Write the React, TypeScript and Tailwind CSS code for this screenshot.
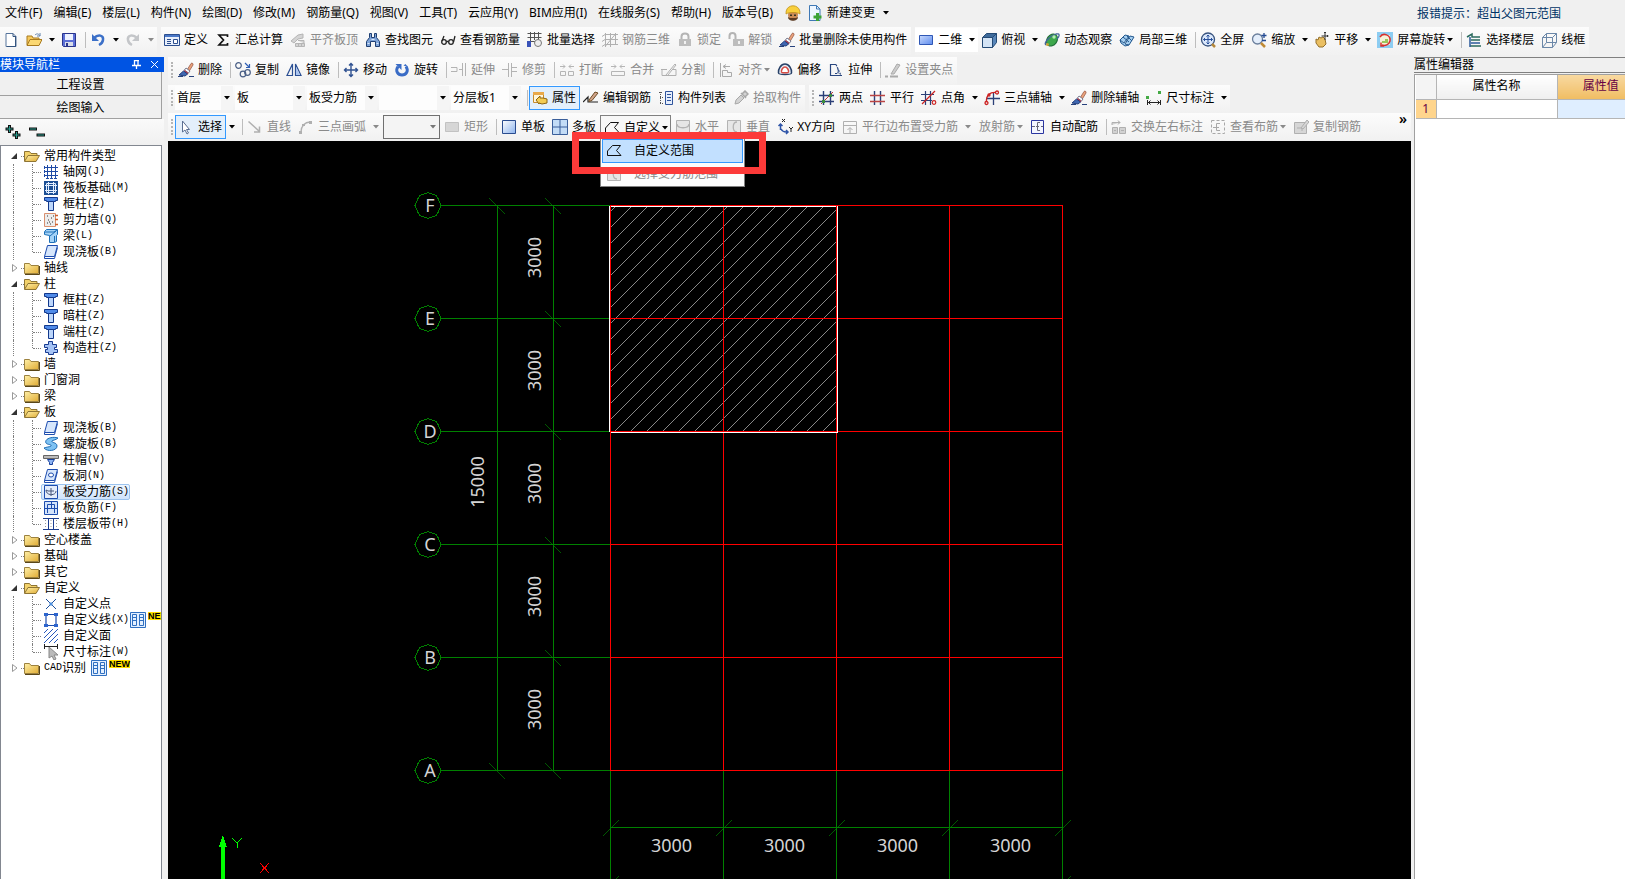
import type { ReactNode } from 'react';
import clsx from 'clsx';

const icons: Record<string, ReactNode> = {
  new: (
    <g>
      <path d="M3 1.5h7l3 3v10H3z" fill="#fff" stroke="#56749c" />
      <path d="M10 1.5v3h3M12.5 5v9.5H4" fill="none" stroke="#35557f" />
    </g>
  ),
  open: (
    <g>
      <path d="M1 13V4h5l1 2h6v3" fill="#f6c95c" stroke="#a87a1e" />
      <path d="M1 13.5l3-6h12l-3 6z" fill="#fbd873" stroke="#a87a1e" />
      <path d="M9 3c2-2 4-1 5 1m0-3v3h-3" fill="none" stroke="#6585ad" />
    </g>
  ),
  save: (
    <g>
      <path d="M1.5 1.5h13v13h-12l-1-1z" fill="#5c6fd6" stroke="#29348c" />
      <path d="M4 2h8v6H4z" fill="#eef2ff" />
      <path d="M4 10h8v4H4z" fill="#d9dde8" />
      <path d="M5 11h2v3H5z" fill="#29348c" />
    </g>
  ),
  undo: (
    <g>
      <path d="M4 6c4-4 10-3 9 2-.4 3-2 4-4 5" fill="none" stroke="#3c70c8" strokeWidth="2.5" />
      <path d="M2 2v7h7z" fill="#3c70c8" />
    </g>
  ),
  redo: (
    <g>
      <path d="M12 6C8 2 2 3 3 8c.4 3 2 4 4 5" fill="none" stroke="#c4c6c9" strokeWidth="2.5" />
      <path d="M14 2v7H7z" fill="#c4c6c9" />
    </g>
  ),
  define: (
    <g>
      <path d="M.5 2.5h15v11H.5z" fill="#e9f0fc" stroke="#2c4f8f" />
      <path d="M1 3h14v2H1z" fill="#4a78c8" />
      <path d="M3 7.5h4M3 9.5h4M3 11.5h4" stroke="#2c4f8f" />
      <path d="M9.5 7.5h4v4h-4z" fill="#fff" stroke="#2c4f8f" />
    </g>
  ),
  sum: <path d="M12.5 5V3H4l4.500 5L4 13h8.500v-2" fill="none" stroke="#111" strokeWidth="1.700" />,
  alignTop: (
    <g stroke="#b5b5b5" fill="#d4d4d4">
      <path d="M1 9l7-6 5-1v4l-5 1-4 4z" />
      <path d="M5.5 11.5h9v3h-9zM8.5 11.5v3M11.5 11.5v3M8 8.5h6v3" />
    </g>
  ),
  find: (
    <g fill="#7ea3d8" stroke="#1e3f73">
      <path d="M4.5 1.5h2v4h3v-4h2v4l3 4v5h-4v-5h-5v5h-4v-5l3-4z" />
      <path d="M2.5 11.5h2M11.5 11.5h2M6.5 7.5h3" stroke="#dbe8fa" />
    </g>
  ),
  glasses: (
    <g fill="none" stroke="#222" strokeWidth="1.300">
      <circle cx="4" cy="10" r="2.300" />
      <circle cx="11" cy="10" r="2.300" />
      <path d="M6.500 9.500h2M2 9l2-5M13.500 10L15 4" />
    </g>
  ),
  batch: (
    <g fill="none" stroke="#555">
      <path d="M.5 1.5h14M.5 5.5h14M3.5 0v12M7.5 0v8M11.5 0v8M.5 9.5h8" />
      <path d="M0 9h4v6H0z" fill="#3852b8" stroke="none" />
      <circle cx="11" cy="11" r="3.500" stroke="#777" fill="#eee" />
    </g>
  ),
  rebar3d: (
    <g fill="none" stroke="#b0b0b0">
      <path d="M3.5 1v14M8.5 1v14M13.5 1v11M0 4.5l3-2h13M0 9.5l3-2h13M0 14.5l3-2h13M3.5 14l10-12" />
    </g>
  ),
  lock: (
    <g>
      <path d="M4.500 7V4.500c0-4 7-4 7 0V7" fill="none" stroke="#b4b4b4" strokeWidth="2" />
      <path d="M2 7h12v7H2z" fill="#bdbdbd" />
      <path d="M7 9h2v3H7z" fill="#f1f1f1" />
    </g>
  ),
  unlock: (
    <g>
      <path d="M1.500 7V4c0-4 6-4 6 0v3" fill="none" stroke="#b4b4b4" strokeWidth="2" />
      <path d="M5 7h11v7H5z" fill="#bdbdbd" />
      <path d="M10 9h2v3h-2z" fill="#f1f1f1" />
    </g>
  ),
  brush: (
    <g>
      <path d="M9 8l4-6.500c1-1 2.500 0 2 1.500L11 9.500z" fill="#e9a27c" stroke="#8f5140" strokeWidth=".7" />
      <path d="M8 6l4 3-1.500 2-4-3z" fill="#fff" stroke="#59617a" strokeWidth=".8" />
      <path d="M6.500 8l4 3-1 1.500-4-3z" fill="#b83a4a" />
      <path d="M1 13l4.500-4 4 3-2.500 2z" fill="#3f67b2" stroke="#223f7c" />
      <path d="M0 14.500h5m6 0h5" stroke="#27427d" />
    </g>
  ),
  copy: (
    <g fill="none" stroke="#4a5f86" strokeWidth="1.200">
      <circle cx="3.500" cy="3.500" r="2.800" />
      <circle cx="8" cy="12" r="2.800" />
      <circle cx="12.500" cy="10.500" r="2.800" />
      <path d="M10 1l4 4m.5-3v3.500H11" stroke="#2f5fb5" />
    </g>
  ),
  mirror: (
    <g fill="none" stroke="#2b4f93" strokeWidth="1.200">
      <path d="M6.500 2v11.500H1zM9.500 2v11.500H15z" />
      <path d="M10 5v8h4z" fill="#a9c3ef" stroke="none" />
    </g>
  ),
  move: (
    <g fill="none" stroke="#2f5191" strokeWidth="1.400">
      <path d="M8 1.500v13M1.500 8h13M6 3.500l2-2 2 2M6 12.500l2 2 2-2M3.500 6l-2 2 2 2M12.500 6l2 2-2 2" />
    </g>
  ),
  rotate: (
    <g>
      <path d="M4 4.500c-3 4.500 0 8.500 4 8.500s7-4 4-8.500" fill="none" stroke="#3a6cc6" strokeWidth="3" />
      <path d="M1.500 2h6v6zM9.500 3.500l2-1.500 2.500 3z" fill="#3a6cc6" />
    </g>
  ),
  extend: <path d="M0 5.500h6v4H0M8 7.500h3M11.500 1v13M14.500 1v13" fill="none" stroke="#b3b3b3" />,
  trim: <path d="M0 7.500h6M6.500 1v14M9.500 1v14M10 5.500h5M10 9.500h5" fill="none" stroke="#b3b3b3" />,
  breakUp: <path d="M1 4.500h5m-2-2l2 2-2 2M15 4.500h-5m2-2l-2 2 2 2M1.500 9.500h5v4h-5zM9.500 9.500h5v4h-5z" fill="none" stroke="#b5b5b5" />,
  merge: <path d="M1 4.500h5m-2-2l2 2-2 2M15 4.500h-5m2-2l-2 2 2 2M1.500 9.500h13v4h-13zM4 9.500h2M10 9.500h2" fill="none" stroke="#b5b5b5" />,
  split: (
    <g fill="none" stroke="#b0b0b0">
      <path d="M0 7.500h6m5 0h4v6H1v-6M5 13l9-11 1 1-8 10" />
    </g>
  ),
  align: <path d="M2.500 1v14M5 4.500h7M5 4.500l3-2m-3 2l3 2M4.500 8.500h5v2h4v4h-9z" fill="none" stroke="#aaa" />,
  offset: (
    <g>
      <path d="M8 2c4 0 7 5 6.500 9-.3 2-12.700 2-13 0C1 7 4 2 8 2z" fill="#e9eef7" stroke="#274067" strokeWidth="1.500" />
      <path d="M8 5c2 0 4 3 3.500 5-.3 1-6.700 1-7 0C4 8 6 5 8 5z" fill="#fff" stroke="#d54b43" strokeWidth="1.500" />
    </g>
  ),
  stretch: (
    <g fill="none" stroke="#29467f" strokeWidth="1.200">
      <path d="M8 2.500H2.500v11H14M2.500 2.500v11" />
      <path d="M8 2.500l5 11M10 6.500v5h-4" strokeDasharray="2 1" />
    </g>
  ),
  pen: (
    <g>
      <path d="M6 12l6-10 3 1-6 9z" fill="#cdcdcd" stroke="#aaa" />
      <path d="M0 14.500h3m2 0h8" stroke="#aaa" strokeWidth="2" />
    </g>
  ),
  props: (
    <g>
      <path d="M1.500 2.500h10v10h-10z" fill="#fff6dc" stroke="#c68a2a" />
      <path d="M1 2h11v3H1z" fill="#e9a94b" />
      <path d="M4 10l4-4v2h3l4 1v4l-5 1-3-1v1z" fill="#f4cc53" stroke="#8d6412" />
    </g>
  ),
  editRebar: (
    <g>
      <path d="M0 12l5-5v5h10" stroke="#222" strokeWidth="1.200" fill="none" />
      <path d="M6 10l6-8 3 1-6 7.500-3 1z" fill="#d2a48a" stroke="#6d4c24" />
    </g>
  ),
  list: (
    <g>
      <path d="M1 2.500h4M2.500 2v12M2 7.500h3M2 13.500h3" stroke="#555" strokeDasharray="1 1" fill="none" />
      <path d="M7.500 1.500h7v13h-7z" fill="#e6eefc" stroke="#2f549c" />
      <path d="M9 4.500h4M9 7.500h4M9 10.500h4" stroke="#2f549c" />
    </g>
  ),
  picker: (
    <g stroke="#a8a8a8" fill="#d3d3d3">
      <path d="M2 14l1-4 5-5 3 3-5 5z" />
      <path d="M8 3l5 5M9 4l3-3 3 3-3 3z" strokeWidth="1.500" />
    </g>
  ),
  twoPoint: (
    <g fill="none">
      <path d="M4.500 1v14M11.500 1v14M0 5.500h15M0 11.500h15" stroke="#2b3f77" strokeWidth="1.400" />
      <path d="M2 14L14 2" stroke="#b33" />
      <path d="M3 10h3v3H3zM10 4h3v3h-3z" fill="#3c8c3c" />
    </g>
  ),
  parallel: (
    <g fill="none" strokeWidth="1.400">
      <path d="M4.500 1v14M10.500 1v14" stroke="#2b3f77" />
      <path d="M0 5.500h15M0 11.500h15" stroke="#b44" />
    </g>
  ),
  pointAngle: (
    <g fill="none" strokeWidth="1.200">
      <path d="M4.500 1v14M9.500 1v14M0 4.500h13M0 10.500h11" stroke="#2b3f77" />
      <path d="M1 14L14 1" stroke="#c22" />
      <circle cx="13" cy="12.500" r="1.800" stroke="#c22" />
    </g>
  ),
  threePoint: (
    <g fill="none" strokeWidth="1.300">
      <path d="M2 8.500h14M9.500 3v12" stroke="#2b3f77" />
      <path d="M2.500 12C2 5 6 2 12 2.500" stroke="#c22" />
      <circle cx="13" cy="2.500" r="1.500" stroke="#c22" />
      <circle cx="2.500" cy="13" r="1.500" stroke="#c22" />
      <circle cx="5" cy="5" r="1" stroke="#c22" />
    </g>
  ),
  dimension: (
    <g>
      <path d="M1.500 10v5M14.500 10v5M2 12.500h12M4.500 10.500l-2 2 2 2M11.500 10.500l2 2-2 2" fill="none" stroke="#222" />
      <path d="M0 6h3v3H0zM12 1h3v3h-3z" fill="#4a4" />
    </g>
  ),
  cursor: <path d="M4.500 2v11l2.500-2 2 4 1.500-1-2-3.500h3z" fill="#fff" stroke="#5b6f92" />,
  line: <path d="M1.500 2.500l11 10m0-5v5.500H7" fill="none" stroke="#b0b0b0" strokeWidth="1.500" />,
  arc: (
    <g fill="none" stroke="#b0b0b0" strokeWidth="1.300">
      <path d="M3 13C3 7 7 3 12 3" />
      <path d="M1 12h3v3H1zM11 2h3v3h-3zM4 5h3v2H4z" fill="#b0b0b0" stroke="none" />
    </g>
  ),
  rect: <path d="M1.500 3.500h13v9h-13z" fill="#d6d6d6" stroke="#c2c2c2" />,
  slab: <path d="M1.500 1.500h13v13h-13z" fill="url(#slabFill)" stroke="#2a4c8f" />,
  slabs: (
    <g>
      <path d="M.5 .5h15v15H.5z" fill="#c3dcf6" stroke="#3a5f9a" />
      <path d="M8 0v16M0 8h16" stroke="#3a5f9a" />
    </g>
  ),
  polygon: <path d="M6.500 2.500h8l-4 5 4.500 5H1.500V8z" fill="none" stroke="#111" />,
  horizontal: (
    <g fill="none" stroke="#b3b3b3">
      <path d="M1.500 1.500h13v12h-13z" fill="#e6e6e6" />
      <path d="M2 5c0 5 12 5 12 0" strokeWidth="1.300" />
    </g>
  ),
  vertical: (
    <g fill="none" stroke="#b3b3b3">
      <path d="M1.500 1.500h13v13h-13z" fill="#e6e6e6" />
      <path d="M11 3c-5 0-5 10 0 10" strokeWidth="1.300" />
    </g>
  ),
  xy: (
    <g fill="none" stroke="#2f55a8" strokeWidth="1.500">
      <path d="M3.500 11V5M1.500 7l2-2 2 2M4 10c2 4 5 3 7 3M9 11l2 2-2 2" />
      <path d="M5 0l3 3M8 0L5 3M12 8l2 2 2-2M14 10v3" stroke="#222" strokeWidth="1" />
    </g>
  ),
  edges: (
    <g fill="none" stroke="#b0b0b0">
      <path d="M1.500 2.500h13v12h-13zM1 6.500h14" />
      <path d="M8 14V9M5.500 11L8 8.500l2.500 2.500" />
    </g>
  ),
  auto: (
    <g fill="none" stroke="#2a35a0">
      <path d="M1.500 1.500h12v13h-12z" fill="#f3f5ff" />
      <path d="M10 3.500H7.500v8H10M2 7.500h3M6 7.500h3M11 7.500h2" stroke="#667" />
    </g>
  ),
  swap: (
    <g fill="#d2d2d2" stroke="#b0b0b0">
      <path d="M1.500 8.500h5v6h-5zM8.500 8.500h6v6h-6zM1 6V3.500h8M7 1.500l2 2-2 2M3 11.500h2M10 11.500h3" />
    </g>
  ),
  viewRebar: (
    <g fill="none" stroke="#a8a8a8">
      <path d="M1.500 1.500h13v13h-13z" strokeDasharray="3 2" />
      <path d="M10 4.500H6.500v7H10M3 8.500h6" />
    </g>
  ),
  copyRebar: (
    <g fill="#d6d6d6" stroke="#b0b0b0">
      <path d="M1.500 3.500h12v11h-12z" />
      <path d="M4 9h5v3M8 9l6-8 2 2-6 7z" />
    </g>
  ),
  plane: <path d="M1.500 3.500h13v9h-13z" fill="url(#planeFill)" stroke="#2f57b5" />,
  cube: (
    <g stroke="#244a75">
      <path d="M1.500 5.500l4-4h10l-4 4z" fill="#3f6b9b" />
      <path d="M1.500 5.500h10v10h-10z" fill="#d4e4f5" />
      <path d="M11.500 5.500l4-4v9l-4 5z" fill="#5886b9" />
    </g>
  ),
  orbit: (
    <g>
      <ellipse cx="8" cy="8" rx="5" ry="6.500" transform="rotate(35 8 8)" fill="#3da84c" stroke="#1d6a35" />
      <path d="M2 13c-3-2 4-9 10-11 4-1 4 2 1 5" fill="none" stroke="#44659b" strokeWidth="1.300" />
      <circle cx="10" cy="5" r="1.700" fill="#b3edb0" />
      <circle cx="3.500" cy="12.500" r="1.500" fill="#c8a436" />
    </g>
  ),
  local3d: (
    <g stroke="#24598f" fill="#a6cff0">
      <path d="M1 8l5-5 4 1-5 7zM6 12l5-8 4 1-5 8zM1 8l1 3 4 3 4-1" />
      <path d="M4 5l6 5M8 4l5 5" fill="none" />
    </g>
  ),
  fit: (
    <g>
      <circle cx="8" cy="7.500" r="6.500" fill="#dbe8fb" stroke="#38537f" strokeWidth="1.300" />
      <path d="M8 3v9M3.500 7.500h9M6.500 4.500L8 3l1.500 1.500M6.500 10.500L8 12l1.500-1.500M5 6L3.500 7.500 5 9M11 6l1.500 1.500L11 9" fill="none" stroke="#274f9b" />
      <path d="M12 12l3 3" stroke="#b6883b" strokeWidth="2.500" />
    </g>
  ),
  zoom: (
    <g>
      <circle cx="6.500" cy="7" r="5" fill="#e4eefb" stroke="#6b7f9c" strokeWidth="1.300" />
      <path d="M10 11l4 4" stroke="#c08b35" strokeWidth="2.500" />
      <path d="M13 1v5M10.500 3.500h5M11 8.500h4" stroke="#234a93" strokeWidth="1.300" />
    </g>
  ),
  pan: (
    <g>
      <path d="M2 7l2 1 1-3 2 1 2-1 2 2 1 5-3 3H5l-3-4z" fill="#eabf62" stroke="#94702b" />
      <path d="M11 0v8M7.500 4h7M10 1l1-1 1 1M13 3l1 1-1 1" stroke="#333" fill="none" />
    </g>
  ),
  screenRotate: (
    <g>
      <path d="M0 0h16v16H0z" fill="#8dcdf2" />
      <path d="M3 3h10v10H3z" fill="#f5f2d8" />
      <path d="M5 9h3v-2h3v4H5z" fill="#9cc75e" />
      <path d="M3 5c3-5 11-2 10 4-1 4-5 5-8 4m-1-2.500v3.500h3" fill="none" stroke="#d6302d" strokeWidth="1.500" />
    </g>
  ),
  floors: (
    <g fill="none" strokeWidth="1.500">
      <path d="M1 5l5-3v3h8M5 8h9M4 14h11" stroke="#2a6a5d" />
      <path d="M4 5v10M5 11h9" stroke="#2b5a9b" />
    </g>
  ),
  wire: (
    <path d="M1.500 5.500l4-4h10v9l-4 5h-10zM1.500 5.500h10v10M11.500 5.500l4-4M5.500 1.500v9h10M1.500 15.500l4-5" fill="none" stroke="#6b87a8" />
  ),
  helmet: (
    <g>
      <circle cx="8" cy="10" r="5" fill="#c98a54" />
      <path d="M1 9c-1-11 15-11 14 0-3-2-11-2-14 0z" fill="#f8cf3c" stroke="#b98a16" strokeWidth=".7" />
      <path d="M3 12c0 5 10 5 10 0l-2 1H5z" fill="#5b3a22" />
      <path d="M5 9.500h2v1.500H5zM9 9.500h2v1.500H9z" fill="#332" />
    </g>
  ),
  addDoc: (
    <g>
      <path d="M2.500 .5h7l3.500 3.500v11.500H2.500z" fill="#eef6ff" stroke="#3f78b5" />
      <path d="M9.500 .5V4H13" fill="none" stroke="#3f78b5" />
      <path d="M9 8h3v2.500h2.500v3H12V16H9v-2.500H6.500v-3H9z" fill="#3da336" />
    </g>
  ),
  folder: (
    <g>
      <path d="M.5 13.500V3.500h5l1.500 2h7.500v8z" fill="url(#folderFill)" stroke="#9c8240" />
      <path d="M15.500 6v8.500H1" fill="none" stroke="#594619" />
    </g>
  ),
  folderOpen: (
    <g>
      <path d="M.5 13V3.500h5l1.500 2h6V8" fill="#f3d26b" stroke="#8f7534" />
      <path d="M.5 13.500l3.500-6h11.500l-3.500 6z" fill="url(#folderFill)" stroke="#8f7534" />
    </g>
  ),
  axisNet: <path d="M4.500 1v13M8.500 1v13M12.500 1v13M1 3.500h14M1 7.500h14M1 11.500h14M3 14.500h3M7 14.500h3M11 14.500h3M1.500 2v3M1.500 6v3M1.500 10v3" fill="none" stroke="#1e4aa5" />,
  raft: (
    <g>
      <path d="M1 1h14v14H1z" fill="#1c4f95" />
      <path d="M3.500 3.500h9v9h-9zM5.500 2v12M10.500 2v12M2 5.500h12M2 10.500h12" fill="none" stroke="#e3efff" />
    </g>
  ),
  column: (
    <g>
      <path d="M1.500 1.500h13v3h-2v1h-9v-1h-2z" fill="#4f8ae8" stroke="#12388c" />
      <path d="M5.500 5.500h5v9h-5z" fill="#bcd6fb" stroke="#12388c" />
    </g>
  ),
  wall: (
    <g>
      <path d="M1.500 1.500h11v13h-11z" fill="#ececec" stroke="#d8906f" />
      <path d="M4 4h1M8 6h1M5 8h1M9 10h1M4 11h1M7 12h1M10 4h1M6 10h1" stroke="#333" />
      <path d="M12 3.500h3M12 7.500h3M12 12.500h3" stroke="#d0622f" strokeWidth="1.500" />
    </g>
  ),
  beam: (
    <g fill="#a4d3f7" stroke="#1e70b8">
      <path d="M1.500 3.500l2-2h11v5l-1 1v6l-2 1h-5v-7l-5-1z" />
      <path d="M7 8l6-5M2 4h9l3-2M11.500 8v6" fill="none" />
    </g>
  ),
  plate: (
    <g>
      <path d="M4.500 1.500h10l-3 11h-10z" fill="#d6e6fc" stroke="#1d4cae" />
      <path d="M1.500 12.500v2h10l3-11" fill="none" stroke="#1d4cae" />
    </g>
  ),
  structCol: (
    <path d="M5.500 1.500h4v3h4v3h-2v2h3v3h-4v2h-5v-2h-3v-3h2v-2h-3v-3h4z" fill="#a5c3f5" stroke="#173a90" />
  ),
  spiral: (
    <path d="M15 2C9 0 1 3 3 7c1 2 6 1 5 3-1 1-5 1-7 2 3 4 13 3 13-2 0-4-6-3-5-5 1-1 4-1 6-3z" fill="#7ec2f3" stroke="#1f6db5" />
  ),
  cap: (
    <g>
      <path d="M.5 3.500h15v3H.5z" fill="#bbb" stroke="#666" />
      <path d="M4.500 7.500h7l-2 3v2h-3v-2z" fill="#8eb5f3" stroke="#173f9c" />
    </g>
  ),
  hole: (
    <g>
      <path d="M4.500 1.500h10l-3 11h-10z" fill="#d6e6fc" stroke="#1d4cae" />
      <path d="M1.500 12.500v2h10l3-11" fill="none" stroke="#1d4cae" />
      <ellipse cx="8" cy="7" rx="2.500" ry="2" fill="#fff" stroke="#1d4cae" />
    </g>
  ),
  mainBar: (
    <g>
      <path d="M1.500 1.500h13v13h-13z" fill="#e4edfb" stroke="#1d4cae" />
      <path d="M3 6c0 6 10 6 10 1M8 4v8M5 7h6M3 6l2 1" fill="none" stroke="#45557a" />
    </g>
  ),
  negBar: (
    <g>
      <path d="M1.500 1.500h13v13h-13z" fill="#d3e3fb" stroke="#1d4cae" />
      <path d="M4.500 13V4.500h7V13M2 8.500h12M8.500 2v6" fill="none" stroke="#1d4cae" />
    </g>
  ),
  strip: (
    <g>
      <path d="M0 2.500h16M0 13.500h16M5.500 3v10M10.500 3v10" stroke="#1c3d8f" />
      <path d="M2.500 4v8M8 4v8M13.500 4v8" stroke="#999" strokeDasharray="1 2" />
    </g>
  ),
  point: (
    <g>
      <path d="M3 3l10 10M13 3L3 13" stroke="#1c4f9c" />
      <path d="M6.500 6.500h3v3h-3z" fill="#4b8fdf" />
    </g>
  ),
  polyline: (
    <g>
      <path d="M3 2.500h10v11H3z" fill="none" stroke="#1d4cae" strokeWidth="1.200" />
      <path d="M1 1h4v3H1zM11 1h4v3h-4zM1 12h4v3H1zM11 12h4v3h-4z" fill="#2c64cd" />
    </g>
  ),
  hatch: <path d="M1 5l4-4M1 10l9-9M1 15L15 1M6 15l9-9M11 15l4-4" stroke="#2758bd" />,
  dimCursor: (
    <g>
      <path d="M1.500 0v5M14.500 0v5M2 2.500h12" stroke="#222" />
      <path d="M6 3v11l3-2 2 4 2-1-2-4h4z" fill="#bbb" stroke="#888" />
    </g>
  ),
  film: (
    <g>
      <path d="M.5 .5h15v15H.5z" fill="#e4f0ff" stroke="#2f6fc0" />
      <path d="M2.500 2.500h4v11h-4zM9.500 2.500h4v11h-4zM3 5.500h3M3 8.500h3M10 5.500h3M10 8.500h3" fill="none" stroke="#2f6fc0" />
    </g>
  ),
};

function Icon({ name }: { name: string }) {
  return (
    <svg viewBox="0 0 16 16" className="size-4 shrink-0" aria-hidden="true">
      {icons[name]}
    </svg>
  );
}

function Caret() {
  return (
    <svg viewBox="0 0 8 4" className="h-1 w-2 shrink-0" aria-hidden="true">
      <path d="M1 0h6L4 3.500z" fill="currentColor" />
    </svg>
  );
}

type ToolProps = {
  icon?: string;
  label?: string;
  title?: string;
  off?: boolean;
  on?: boolean;
  // "split" has its own drop-down button, "tight" keeps the arrow beside the text
  arrow?: 'split' | 'tight';
};

function Tool({ icon, label, title, off, on, arrow }: ToolProps) {
  return (
    <div className={clsx('flex shrink-0 items-center', off ? 'text-[#8a8a8a]' : 'text-black')}>
      <button
        type="button"
        disabled={off}
        aria-label={label ?? title}
        className={clsx(
          'flex h-6 items-center gap-1 border',
          on ? 'border-[#3399ff] bg-[#e3effb]' : 'border-transparent',
          icon ? 'pl-[2px]' : 'pl-1',
          arrow === 'tight' ? 'pr-[2px]' : 'pr-[3px]',
        )}
      >
        {icon && <Icon name={icon} />}
        {label && <span>{label}</span>}
        {arrow === 'tight' && (
          <span className="-ml-[3px]">
            <Caret />
          </span>
        )}
      </button>
      {arrow === 'split' && (
        <button type="button" disabled={off} aria-label={`${label ?? title} 选项`} className="flex h-6 w-3 items-center justify-center">
          <Caret />
        </button>
      )}
    </div>
  );
}

function Sep() {
  return <div className="mr-px ml-1 h-4 w-px shrink-0 bg-[#bdbdbd]" />;
}

function Grip() {
  return <div className="mr-[2px] ml-[3px] h-4 shrink-0 border-l-2 border-dotted border-[#b5b5b5]" />;
}

function Bar({ children }: { children: ReactNode }) {
  return <div className="flex h-7 shrink-0 items-center bg-linear-to-b from-[#fcfcfc] to-[#f1f1f1] pb-[2px]">{children}</div>;
}

function Combo({ label, value, width }: { label: string; value: string; width: string }) {
  return (
    <div className={clsx('relative mr-[2px] h-6 shrink-0 bg-[#fdfdfd]', width)}>
      <select aria-label={label} className="h-full w-full appearance-none bg-transparent pl-[2px] outline-none">
        <option>{value}</option>
      </select>
      <span className="pointer-events-none absolute inset-y-0 right-0 flex w-3 items-center justify-center bg-[#f5f5f5]">
        <Caret />
      </span>
    </div>
  );
}

const menus = [
  '文件(F)', '编辑(E)', '楼层(L)', '构件(N)', '绘图(D)', '修改(M)', '钢筋量(Q)', '视图(V)', '工具(T)',
  '云应用(Y)', 'BIM应用(I)', '在线服务(S)', '帮助(H)', '版本号(B)',
];

function MenuBar() {
  return (
    <header className="flex h-[27px] shrink-0 items-center justify-between pb-[2px]">
      <nav className="flex items-center">
        {menus.map((m) => (
          <button key={m} type="button" className="shrink-0 pr-[6px] pl-[5px]">
            {m}
          </button>
        ))}
        <button type="button" aria-label="客服" className="ml-[6px] shrink-0">
          <Icon name="helmet" />
        </button>
        <button type="button" className="ml-[6px] flex shrink-0 items-center gap-1">
          <Icon name="addDoc" />
          新建变更
          <span className="ml-[3px]">
            <Caret />
          </span>
        </button>
      </nav>
      <p className="mt-[2px] mr-16 shrink-0 text-[#003366]">报错提示：超出父图元范围</p>
    </header>
  );
}

function MainToolbar() {
  return (
    <div className="flex h-[30px] shrink-0 items-start gap-1">
      <Bar>
        <Tool icon="new" title="新建" />
        <Tool icon="open" title="打开" arrow="split" />
        <Tool icon="save" title="保存" />
        <Sep />
        <Tool icon="undo" title="撤销" arrow="split" />
        <Tool icon="redo" title="恢复" arrow="split" off />
      </Bar>
      <Bar>
        <Tool icon="define" label="定义" />
        <Tool icon="sum" label="汇总计算" />
        <Tool icon="alignTop" label="平齐板顶" off />
        <Tool icon="find" label="查找图元" />
        <Tool icon="glasses" label="查看钢筋量" />
        <Tool icon="batch" label="批量选择" />
        <Tool icon="rebar3d" label="钢筋三维" off />
        <Tool icon="lock" label="锁定" off />
        <Tool icon="unlock" label="解锁" off />
        <Tool icon="brush" label="批量删除未使用构件" />
      </Bar>
      <Bar>
        <div className="bg-white">
          <Tool icon="plane" label="二维" arrow="split" />
        </div>
        <Tool icon="cube" label="俯视" arrow="split" />
        <Tool icon="orbit" label="动态观察" />
        <Tool icon="local3d" label="局部三维" />
        <Sep />
        <Tool icon="fit" label="全屏" />
        <Tool icon="zoom" label="缩放" arrow="split" />
        <Tool icon="pan" label="平移" arrow="split" />
        <Tool icon="screenRotate" label="屏幕旋转" arrow="tight" />
        <Sep />
        <Tool icon="floors" label="选择楼层" />
        <Tool icon="wire" label="线框" />
      </Bar>
    </div>
  );
}

function EditToolbar() {
  return (
    <div className="flex h-7 shrink-0 items-center">
      <Bar>
        <Grip />
        <Tool icon="brush" label="删除" />
        <Sep />
        <Tool icon="copy" label="复制" />
        <Tool icon="mirror" label="镜像" />
        <Sep />
        <Tool icon="move" label="移动" />
        <Tool icon="rotate" label="旋转" />
        <Sep />
        <Tool icon="extend" label="延伸" off />
        <Tool icon="trim" label="修剪" off />
        <Sep />
        <Tool icon="breakUp" label="打断" off />
        <Tool icon="merge" label="合并" off />
        <Tool icon="split" label="分割" off />
        <Sep />
        <Tool icon="align" label="对齐" arrow="tight" off />
        <Tool icon="offset" label="偏移" />
        <Tool icon="stretch" label="拉伸" />
        <Sep />
        <Tool icon="pen" label="设置夹点" off />
      </Bar>
    </div>
  );
}

function ComponentToolbar() {
  return (
    <div className="flex h-7 shrink-0 items-center gap-1">
      <Bar>
        <Grip />
        <Combo label="楼层" value="首层" width="w-[58px]" />
        <Combo label="构件大类" value="板" width="w-[70px]" />
        <Combo label="构件类型" value="板受力筋" width="w-[70px]" />
        <Combo label="构件" value="" width="w-[70px]" />
        <Combo label="分层" value="分层板1" width="w-[70px]" />
        <Sep />
        <Tool icon="props" label="属性" on />
        <Tool icon="editRebar" label="编辑钢筋" />
        <Tool icon="list" label="构件列表" />
        <Tool icon="picker" label="拾取构件" off />
      </Bar>
      <Bar>
        <Grip />
        <Tool icon="twoPoint" label="两点" />
        <Tool icon="parallel" label="平行" />
        <Tool icon="pointAngle" label="点角" arrow="split" />
        <Tool icon="threePoint" label="三点辅轴" arrow="split" />
        <Tool icon="brush" label="删除辅轴" />
        <Tool icon="dimension" label="尺寸标注" arrow="split" />
      </Bar>
    </div>
  );
}

function CustomMenu() {
  return (
    <div className="relative mr-px shrink-0">
      <button type="button" aria-expanded="true" className="flex h-6 w-[71px] items-center gap-1 border border-b-0 border-[#808080] bg-[#f7f7f7] pl-[3px]">
        <Icon name="polygon" />
        <span>自定义</span>
        <span className="-ml-[3px]">
          <Caret />
        </span>
      </button>
      <div className="absolute top-[22px] left-0 z-10 w-[145px] border border-[#808080] bg-[#fcfcfc] p-px" role="menu">
        <button type="button" role="menuitem" className="flex h-6 w-full items-center gap-3 border border-[#3399ff] bg-[#c2e0ff] pl-[3px]">
          <Icon name="polygon" />
          自定义范围
        </button>
        <button type="button" role="menuitem" disabled className="flex h-[22px] w-full items-center gap-3 pl-1 text-[#8a8a8a]">
          <Icon name="vertical" />
          选择受力筋范围
        </button>
      </div>
      <div className="pointer-events-none absolute top-[17px] -left-7 z-20 h-[42px] w-[194px] border-7 border-[#fc3a39]" />
    </div>
  );
}

function DrawToolbar() {
  return (
    <div className="flex h-7 shrink-0 items-center justify-between bg-linear-to-b from-[#fcfcfc] to-[#f1f1f1]">
      <div className="flex items-center">
        <Grip />
        <Tool icon="cursor" label="选择" on arrow="split" />
        <Sep />
        <Tool icon="line" label="直线" off />
        <Tool icon="arc" label="三点画弧" arrow="split" off />
        <div className="relative mx-px h-6 w-[57px] border border-[#707070] bg-[#f4f4f4]">
          <select aria-label="画弧方式" className="h-full w-full appearance-none bg-transparent">
            <option> </option>
          </select>
          <span className="pointer-events-none absolute inset-y-0 right-0 flex w-3 items-center justify-center text-[#777]">
            <Caret />
          </span>
        </div>
        <Tool icon="rect" label="矩形" off />
        <Sep />
        <Tool icon="slab" label="单板" />
        <Tool icon="slabs" label="多板" />
        <CustomMenu />
        <Tool icon="horizontal" label="水平" off />
        <Tool icon="vertical" label="垂直" off />
        <Tool icon="xy" label="XY方向" />
        <Tool icon="edges" label="平行边布置受力筋" arrow="split" off />
        <Tool label="放射筋" arrow="tight" off />
        <Tool icon="auto" label="自动配筋" />
        <Sep />
        <Tool icon="swap" label="交换左右标注" off />
        <Tool icon="viewRebar" label="查看布筋" arrow="tight" off />
        <Tool icon="copyRebar" label="复制钢筋" off />
      </div>
      <button type="button" aria-label="更多" className="mr-1 self-start text-sm leading-3 font-semibold">
        »
      </button>
    </div>
  );
}

type Leaf = { icon: string; label: string; hotkey?: string; selected?: boolean; badge?: string };
type Group = { label: string; prefix?: string; children?: Leaf[]; badge?: string };

const tree: Group[] = [
  {
    label: '常用构件类型',
    children: [
      { icon: 'axisNet', label: '轴网', hotkey: 'J' },
      { icon: 'raft', label: '筏板基础', hotkey: 'M' },
      { icon: 'column', label: '框柱', hotkey: 'Z' },
      { icon: 'wall', label: '剪力墙', hotkey: 'Q' },
      { icon: 'beam', label: '梁', hotkey: 'L' },
      { icon: 'plate', label: '现浇板', hotkey: 'B' },
    ],
  },
  { label: '轴线' },
  {
    label: '柱',
    children: [
      { icon: 'column', label: '框柱', hotkey: 'Z' },
      { icon: 'column', label: '暗柱', hotkey: 'Z' },
      { icon: 'column', label: '端柱', hotkey: 'Z' },
      { icon: 'structCol', label: '构造柱', hotkey: 'Z' },
    ],
  },
  { label: '墙' },
  { label: '门窗洞' },
  { label: '梁' },
  {
    label: '板',
    children: [
      { icon: 'plate', label: '现浇板', hotkey: 'B' },
      { icon: 'spiral', label: '螺旋板', hotkey: 'B' },
      { icon: 'cap', label: '柱帽', hotkey: 'V' },
      { icon: 'hole', label: '板洞', hotkey: 'N' },
      { icon: 'mainBar', label: '板受力筋', hotkey: 'S', selected: true },
      { icon: 'negBar', label: '板负筋', hotkey: 'F' },
      { icon: 'strip', label: '楼层板带', hotkey: 'H' },
    ],
  },
  { label: '空心楼盖' },
  { label: '基础' },
  { label: '其它' },
  {
    label: '自定义',
    children: [
      { icon: 'point', label: '自定义点' },
      { icon: 'polyline', label: '自定义线', hotkey: 'X', badge: 'NE' },
      { icon: 'hatch', label: '自定义面' },
      { icon: 'dimCursor', label: '尺寸标注', hotkey: 'W' },
    ],
  },
  { label: '识别', prefix: 'CAD', badge: 'NEW' },
];

function Badge({ text }: { text: string }) {
  return (
    <span className="flex shrink-0 items-start gap-[2px]">
      <Icon name="film" />
      <span className="h-2 bg-[#ffe000] font-['Liberation_Sans'] text-[9px] leading-2 font-bold">{text}</span>
    </span>
  );
}

function TreeLeaf({ leaf, last }: { leaf: Leaf; last: boolean }) {
  return (
    <li className="flex h-4 items-center">
      <span className="ml-3 h-4 w-[19px] shrink-0 border-l border-dotted border-[#808080]" />
      <span className={clsx('w-px shrink-0 self-start border-l border-dotted border-[#808080]', last ? 'h-2' : 'h-4')} />
      <span className="w-2 shrink-0 border-t border-dotted border-[#808080]" />
      <button
        type="button"
        className={clsx(
          'flex h-4 shrink-0 items-center gap-1 rounded-xs border pl-px whitespace-nowrap',
          leaf.selected ? 'border-[#9cc3ee] bg-linear-to-b from-[#eef6ff] to-[#cfe3fb]' : 'border-transparent',
        )}
      >
        <Icon name={leaf.icon} />
        <span className="flex items-center">
          {leaf.label}
          {leaf.hotkey && <span className="font-['Liberation_Mono'] text-[10px]">({leaf.hotkey})</span>}
        </span>
      </button>
      {leaf.badge && <Badge text={leaf.badge} />}
    </li>
  );
}

function TreeGroup({ group }: { group: Group }) {
  const open = Boolean(group.children);
  return (
    <li>
      <button type="button" aria-expanded={open} className="flex h-4 items-center whitespace-nowrap">
        <svg viewBox="0 0 8 8" className="ml-[9px] size-2 shrink-0" aria-hidden="true">
          {open ? <path d="M7 1v6H1z" fill="#333" /> : <path d="M2.500 .500v7L7 4z" fill="#fff" stroke="#999" />}
        </svg>
        <span className="ml-[3px] w-[3px] border-t border-dotted border-[#808080]" />
        <Icon name={open ? 'folderOpen' : 'folder'} />
        <span className="mr-[5px] ml-1 flex items-center">
          {group.prefix && <span className="font-['Liberation_Mono'] text-[10px]">{group.prefix}</span>}
          {group.label}
        </span>
        {group.badge && <Badge text={group.badge} />}
      </button>
      {group.children && (
        <ul>
          {group.children.map((leaf, i) => (
            <TreeLeaf key={leaf.label} leaf={leaf} last={i === group.children!.length - 1} />
          ))}
        </ul>
      )}
    </li>
  );
}

function NavPanel() {
  return (
    <aside className="mr-1 flex w-[164px] shrink-0 flex-col">
      <div className="flex h-[15px] items-center bg-[#0054e3] text-white">
        <h2 className="flex-1">模块导航栏</h2>
        <button type="button" aria-label="固定">
          <svg viewBox="0 0 9 9" className="mr-[9px] size-[9px]">
            <path d="M2.500 0v5M6 0v5M2 .500h5M0 5.500h9M4.500 6v3" fill="none" stroke="#fff" strokeWidth="1.300" />
          </svg>
        </button>
        <button type="button" aria-label="关闭">
          <svg viewBox="0 0 9 9" className="mr-[5px] size-[9px]">
            <path d="M1 1l7 7M8 1L1 8" stroke="#fff" />
          </svg>
        </button>
      </div>
      <div className="mr-[2px] flex flex-col border-r border-[#a0a0a0] pt-px">
        <button type="button" className="h-[23px] border-b border-[#a0a0a0] pt-px">
          工程设置
        </button>
        <button type="button" className="h-[23px] border-b border-[#a0a0a0] pt-px">
          绘图输入
        </button>
      </div>
      <div className="flex h-[26px] items-center gap-2 bg-linear-to-b from-[#fafafa] to-[#f0f0f0] pl-[5px]">
        <button type="button" aria-label="全部展开">
          <svg viewBox="0 0 16 16" className="size-4">
            <path d="M4.500 1v8M.5 5h8M11.500 7v8M7.500 11h8" stroke="#111" strokeWidth="3" />
            <path d="M4.500 2v6M1.500 5h6M11.500 8v6M8.500 11h6" stroke="#2a9d8f" />
          </svg>
        </button>
        <button type="button" aria-label="全部折叠">
          <svg viewBox="0 0 16 16" className="size-4">
            <path d="M0 5h8M7.500 11H16" stroke="#111" strokeWidth="3" />
            <path d="M1 5h6M8.500 11H15" stroke="#2a9d8f" />
          </svg>
        </button>
      </div>
      <div className="mr-[2px] min-h-0 flex-1 overflow-hidden border border-b-0 border-[#828790] bg-white pt-[2px]">
        <ul>
          {tree.map((g) => (
            <TreeGroup key={g.label} group={g} />
          ))}
        </ul>
      </div>
    </aside>
  );
}

const xs = [442.5, 555.5, 668.5, 781.5, 894.5];
const rows = [
  { name: 'F', y: 64.5 },
  { name: 'E', y: 177.5 },
  { name: 'D', y: 290.5 },
  { name: 'C', y: 403.5 },
  { name: 'B', y: 516.5 },
  { name: 'A', y: 629.5 },
];
const hatchSums = Array.from({ length: 28 }, (_, i) => 513 + i * 16);

function Canvas() {
  return (
    <svg className="min-h-0 w-full flex-1 bg-black font-['Noto_Sans'] text-[18px]" role="img" aria-label="轴网平面图">
      <defs>
        <clipPath id="slabClip">
          <rect x="443" y="66" width="225" height="225" />
        </clipPath>
      </defs>

      <g clipPath="url(#slabClip)" stroke="#c0c0c0" strokeWidth=".7" shapeRendering="crispEdges">
        {hatchSums.map((s) => (
          <line key={s} x1={s - 60} y1="60" x2={s - 300} y2="300" />
        ))}
      </g>

      <g stroke="#008000" fill="none" shapeRendering="crispEdges">
        {rows.map((r) => (
          <g key={r.name}>
            <polygon points="-13,0 -10,-7 -8,-10 0,-13 8,-10 10,-7 13,0 10,7 8,10 0,13 -8,10 -10,7" transform={`translate(260 ${r.y})`} />
            <path d={`M273 ${r.y}H442`} />
          </g>
        ))}
        <path d="M329.500 64V630M385.500 64V630M442 686.500H895" />
        {xs.map((x) => (
          <path key={x} d={`M${x} 630V2000`} />
        ))}
      </g>

      <g stroke="#008000" strokeWidth=".7" fill="none" shapeRendering="crispEdges">
        {rows.map((r) => (
          <path key={r.name} d={`M377.500 ${r.y - 8}l16 16`} />
        ))}
        <path d="M321.500 56.500l16 16M321.500 621.500l16 16" />
        {xs.map((x) => (
          <path key={x} d={`M${x - 8} 694.500l16-16`} />
        ))}
        <path d="M434.500 750.500l16-16M886.500 750.500l16-16" />
      </g>

      <g stroke="#ff0000" shapeRendering="crispEdges">
        {rows.map((r) => (
          <line key={r.name} x1="442" x2="895" y1={r.y} y2={r.y} />
        ))}
        {xs.map((x) => (
          <line key={x} x1={x} x2={x} y1="64" y2="630" />
        ))}
      </g>
      <path d="M441.500 65V291M443 65.500H668M669.500 65V292M443 291.500H669" stroke="#fff" fill="none" shapeRendering="crispEdges" />

      <g fill="#d4d4d4" textAnchor="middle">
        {rows.map((r) => (
          <text key={r.name} x="262" y={r.y + 6}>
            {r.name}
          </text>
        ))}
        {rows.slice(0, 5).map((r) => (
          <text key={r.name} transform={`translate(373 ${r.y + 52}) rotate(-90)`}>
            3000
          </text>
        ))}
        <text transform="translate(316 341) rotate(-90)">15000</text>
        {xs.slice(0, 4).map((x) => (
          <text key={x} x={x + 61} y="711">
            3000
          </text>
        ))}
      </g>

      <g shapeRendering="crispEdges" fill="none">
        <path d="M53 2000V706h-2l4-12 4 12h-2V2000z" fill="#00ff00" />
        <path d="M64 697l5 5 5-5M69 702v5" stroke="#00ff00" />
        <path d="M92 722l9 10M101 722l-9 10" stroke="#ff0000" />
      </g>
    </svg>
  );
}

function PropertyPanel() {
  return (
    <aside className="ml-[3px] flex w-[211px] shrink-0 flex-col overflow-hidden">
      <h2 className="h-4 shrink-0 border-y border-[#808080] leading-[14px]">属性编辑器</h2>
      <div className="mt-px min-h-0 flex-1 border-t border-l border-[#a0a0a0] bg-white pl-px">
        <table className="w-[228px] table-fixed border-collapse text-center">
          <thead>
            <tr className="h-6">
              <th className="w-5 border-r border-b border-[#b5b5b5] bg-[#f4f4f4] p-0" aria-label="序号" />
              <th className="w-[121px] border-r border-b border-[#b5b5b5] bg-linear-to-b from-white to-[#efefef] p-0 pb-[2px] font-normal">属性名称</th>
              <th className="border-b border-[#b5b5b5] bg-linear-to-b from-[#f8d9a0] to-[#f0bd62] p-0 pb-[2px] font-normal text-[#660044]">属性值</th>
            </tr>
          </thead>
          <tbody>
            <tr className="h-[19px]">
              <td className="border-r border-b border-[#b5b5b5] bg-[#ffd58d] p-0 text-[#660044]">1</td>
              <td className="border-r border-b border-[#b5b5b5]" />
              <td className="border-b border-[#b5b5b5] bg-[#dfeeff]" />
            </tr>
          </tbody>
        </table>
      </div>
    </aside>
  );
}

export default function App() {
  return (
    <div className="flex h-screen flex-col overflow-hidden bg-[#f0f0f0] font-['Noto_Sans','Noto_Sans_CJK_SC',sans-serif] text-xs leading-4 text-black">
      <svg className="absolute size-0" aria-hidden="true">
        <linearGradient id="slabFill" x1="0" y1="0" x2="1" y2="1">
          <stop offset="0" stopColor="#fff" />
          <stop offset="1" stopColor="#8db4ee" />
        </linearGradient>
        <linearGradient id="planeFill" x1="0" y1="0" x2="1" y2="1">
          <stop offset="0" stopColor="#c9dafc" />
          <stop offset="1" stopColor="#5d8bee" />
        </linearGradient>
        <linearGradient id="folderFill" x1="0" y1="0" x2="1" y2="1">
          <stop offset="0" stopColor="#fff0a8" />
          <stop offset="1" stopColor="#e0ac35" />
        </linearGradient>
      </svg>
      <MenuBar />
      <MainToolbar />
      <div className="flex min-h-0 flex-1">
        <NavPanel />
        <main className="flex min-w-0 flex-1 flex-col">
          <EditToolbar />
          <ComponentToolbar />
          <DrawToolbar />
          <Canvas />
        </main>
        <PropertyPanel />
      </div>
    </div>
  );
}
